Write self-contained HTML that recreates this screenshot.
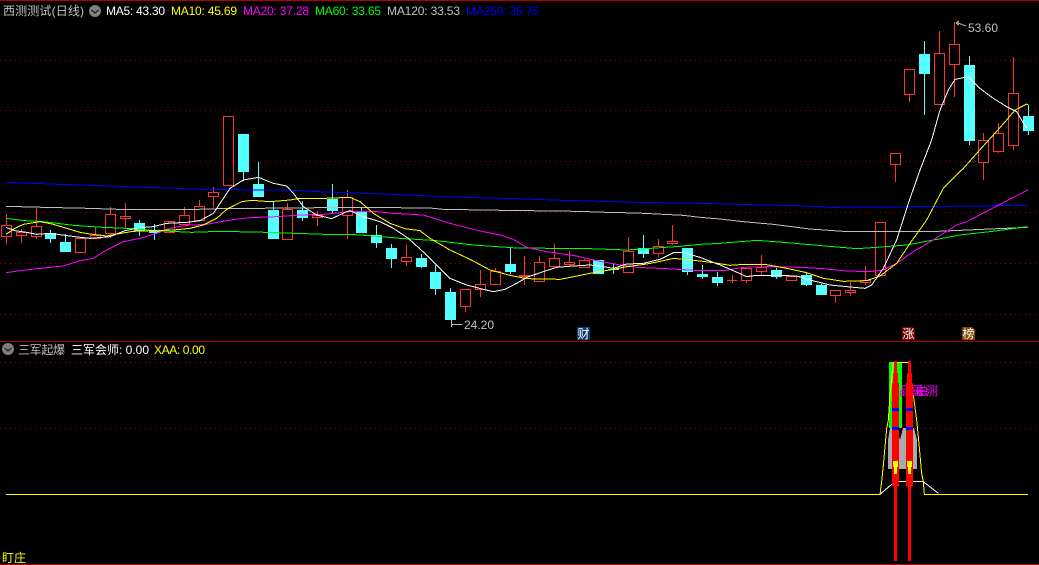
<!DOCTYPE html>
<html><head><meta charset="utf-8">
<style>
html,body{margin:0;padding:0;background:#000;width:1039px;height:565px;overflow:hidden}
svg{display:block;shape-rendering:crispEdges}
text{font-family:"Liberation Sans","WenQuanYi Zen Hei","Noto Sans CJK SC",sans-serif;font-size:12px}
.l polyline{fill:none;stroke-width:1;vector-effect:non-scaling-stroke;stroke-linejoin:round;shape-rendering:crispEdges}
</style></head><body>
<svg width="1039" height="565" viewBox="0 0 1039 565" xmlns="http://www.w3.org/2000/svg">
<rect width="1039" height="565" fill="#000"/>
<!-- grid -->
<path d="M0 60.5H1039M0 110.5H1039M0 161.5H1039M0 212.5H1039M0 263.5H1039M0 314.5H1039M0 362.5H1039M0 428.5H1039" stroke="#a00000" stroke-width="1" stroke-dasharray="1 4" fill="none"/>
<path d="M0 .5H1039M0 341.5H1039M0 564.5H1039" stroke="#b00000" stroke-width="1" fill="none"/>
<!-- cyan candles -->
<path stroke="#55ffff" fill="none" d="M50.5 230V243M65.5 234V252M139.5 220V236M154.5 224V240M243.5 134V181M258.5 162V197M273.5 202V239M302.5 201V221M332.5 184V213M361.5 208V233M376.5 225V248M391.5 244V268M421.5 254V268M435.5 265V295M450.5 288V320M510.5 248V274M598.5 260V274M613.5 264V274M643.5 235V258M687.5 248V275M702.5 265V279M717.5 272V286M776.5 268V279M806.5 273V286M821.5 284V295M924.5 41V115M969.5 56V145M1028.5 105V135M608 269.5H619"/>
<path fill="#55ffff" d="M45 233h11v6h-11zM60 242h11v10h-11zM134 223h11v8h-11zM149 230h11v3h-11zM238 134h11v38h-11zM253 184h11v13h-11zM268 210h11v29h-11zM297 210h11v8h-11zM327 199h11v12h-11zM356 211h11v22h-11zM371 235h11v8h-11zM386 248h11v11h-11zM416 258h11v9h-11zM430 272h11v17h-11zM445 292h11v28h-11zM505 264h11v8h-11zM593 260h11v14h-11zM638 248h11v6h-11zM682 248h11v24h-11zM697 274h11v3h-11zM712 277h11v6h-11zM771 270h11v7h-11zM801 275h11v10h-11zM816 285h11v10h-11zM919 54h11v20h-11zM964 65h11v76h-11zM1023 116h11v15h-11z"/>
<!-- red candles -->
<path stroke="#ff3232" fill="none" d="M6.500 214V244M21.500 229V243M36.500 208V239M95.500 227V239M110.500 207V238M125.500 203V228M184.500 207V215M199.500 200V206M213.500 187V207M287.500 203V209M317.500 211V226M347.500 190V239M406.500 245V266M465.500 307V312M480.500 270V297M495.500 268V271M524.500 256V285M539.500 256V262M554.500 244V258M569.500 251V267M584.500 259V260M628.500 237V251M658.500 239V257M672.500 225V245M746.500 281V283M761.500 255V275M835.500 296V303M850.500 282V296M865.500 266V285M895.500 165V182M909.500 95V102M939.500 31V53M954.500 22V97M983.500 133V180M998.500 123V153M1013.500 57V150M727 280.500H737M732.500 275V283"/>
<path stroke="#ff3232" fill="#000" d="M1.5 225.5h10v11h-10zM16.5 232.5h10v3h-10zM31.5 226.5h10v10h-10zM75.5 238.5h10v14h-10zM90.5 235.5h10v3h-10zM105.5 214.5h10v19h-10zM120.5 216.5h10v2h-10zM164.5 221.5h10v11h-10zM179.5 215.5h10v9h-10zM194.5 206.5h10v14h-10zM208.5 192.5h10v4h-10zM223.5 116.5h10v69h-10zM282.5 209.5h10v30h-10zM312.5 215.5h10v2h-10zM342.5 197.5h10v18h-10zM401.5 257.5h10v4h-10zM460.5 289.5h10v17h-10zM475.5 284.5h10v5h-10zM490.5 271.5h10v13h-10zM519.5 275.5h10v1h-10zM534.5 262.5h10v19h-10zM549.5 258.5h10v8h-10zM564.5 262.5h10v2h-10zM579.5 260.5h10v7h-10zM623.5 251.5h10v21h-10zM653.5 246.5h10v7h-10zM667.5 241.5h10v2h-10zM741.5 268.5h10v12h-10zM756.5 267.5h10v4h-10zM786.5 276.5h10v4h-10zM830.5 290.5h10v5h-10zM845.5 290.5h10v2h-10zM860.5 280.5h10v2h-10zM875.5 222.5h10v53h-10zM890.5 153.5h10v11h-10zM904.5 69.5h10v25h-10zM934.5 53.5h10v51h-10zM949.5 44.5h10v20h-10zM978.5 140.5h10v22h-10zM993.5 133.5h10v18h-10zM1008.5 93.5h10v52h-10z"/>
<!-- MA lines -->
<g class="l" transform="translate(0,170) scale(.33333)">
<polyline stroke="#0000ff" points="18,37 175,43 265,46 355,49 440,52 530,55 620,58 880,61 975,66 1050,68"/>
<polyline stroke="#c0c0c0" points="18,109 130,112 265,115 355,118 590,118 660,116 880,114 1050,112"/>
<polyline stroke="#00ff00" points="18,145 75,152 130,155 220,166 310,172 400,176 470,182 575,187 660,184 800,187 885,190 975,193 1050,193"/>
<polyline stroke="#ff00ff" points="18,308 75,300 140,293 190,288 240,272 280,265 320,240 370,215 420,205 470,190 510,175 560,166 620,163 690,150 750,143 830,140 900,135 970,133 1020,128 1050,125"/>
<polyline stroke="#ffff00" points="18,193 45,175 70,163 120,155 160,163 200,175 240,187 270,192 320,198 350,192 400,184 450,182 520,180 570,175 610,165 650,145 680,118 725,95 755,91 810,95 870,90 900,85 975,85 1050,82"/>
<polyline stroke="#ffffff" points="18,172 45,182 80,187 110,193 150,190 195,196 240,202 270,205 330,200 375,182 420,173 460,170 500,160 560,157 600,152 640,130 660,100 690,55 730,30 775,22 820,40 860,48 880,70 910,110 950,135 995,146 1040,125 1050,122"/>
</g>
<g class="l" transform="translate(350,170) scale(.33333)">
<polyline stroke="#0000ff" points="0,68 100,72 190,76 280,80 370,83 460,85 640,91 860,97 1050,100"/>
<polyline stroke="#c0c0c0" points="0,112 240,114 280,118 460,121 680,124 770,127 860,129 1000,136 1050,142"/>
<polyline stroke="#00ff00" points="0,193 60,197 150,205 260,212 370,225 500,234 720,236 830,240 990,229 1050,223"/>
<polyline stroke="#ff00ff" points="0,125 70,124 130,130 220,135 300,160 400,185 450,195 490,208 530,232 590,245 680,258 740,272 800,283 860,292 950,296 1050,302"/>
<polyline stroke="#ffff00" points="0,82 30,95 70,130 120,160 165,176 210,182 240,205 300,240 360,268 420,300 480,316 530,326 630,328 670,320 730,308 790,298 830,290 890,282 940,272 970,265 1050,273"/>
<polyline stroke="#ffffff" points="0,122 40,140 90,155 130,175 175,205 230,255 300,325 350,345 400,358 430,365 465,358 500,340 530,322 580,305 620,292 670,288 720,285 760,290 790,295 830,282 880,280 930,268 970,248 1000,248 1050,262"/>
</g>
<g class="l" transform="translate(700,170) scale(.33333)">
<polyline stroke="#0000ff" points="0,100 160,104 300,107 390,112 650,110 983,106"/>
<polyline stroke="#c0c0c0" points="0,142 60,147 130,155 220,163 330,177 430,184 690,185 870,177 983,172"/>
<polyline stroke="#00ff00" points="0,223 60,220 120,215 170,211 250,217 330,224 400,230 470,236 530,232 620,225 700,210 780,195 870,185 983,170"/>
<polyline stroke="#ff00ff" points="0,302 70,302 130,292 210,290 300,292 370,296 440,303 510,305 550,300 590,280 640,245 700,210 770,165 800,155 900,103 983,60"/>
<polyline stroke="#ffff00" points="0,273 40,278 90,286 120,284 200,284 260,295 320,308 370,325 430,334 500,332 540,318 590,280 630,220 680,150 730,55 785,0"/>
<polyline stroke="#ffffff" points="0,262 60,285 100,302 140,320 170,316 230,316 290,318 330,330 390,345 440,350 495,355 515,345 550,295 590,210 625,100 660,0"/>
</g>
<g class="l" transform="translate(860,10) scale(.33333)">
<polyline stroke="#ffff00" points="306,480 350,430 400,375 440,330 465,300 500,282 505,285"/>
<polyline stroke="#ffffff" points="180,480 215,390 240,300 265,240 285,208 325,200 360,235 400,265 440,290 470,305 500,355"/>
</g>
<!-- price markers -->
<path d="M462.500 324.500H452M451.500 323.500V320M451.500 323.500V327" stroke="#c0c0c0" fill="none"/>
<text x="464" y="329" fill="#c0c0c0" textLength="30">24.20</text>
<path d="M966 26L958 23M956 23l3-2M956 23l3 2" stroke="#c0c0c0" fill="none"/>
<text x="968" y="32" fill="#c0c0c0" textLength="30">53.60</text>
<!-- header -->
<text x="3" y="15" fill="#c0c0c0" font-size="12" textLength="81">西测测试(日线)</text>
<g style="shape-rendering:auto">
<circle cx="95" cy="11" r="6" fill="#808080"/>
<path d="M91.5 10l3.5 3 3.5-3" stroke="#222" stroke-width="1.4" fill="none"/>
<circle cx="8" cy="349" r="6" fill="#808080"/>
<path d="M4.5 348l3.5 3 3.5-3" stroke="#222" stroke-width="1.4" fill="none"/>
</g>
<text x="106" y="15" fill="#ffffff" textLength="59">MA5: 43.30</text>
<text x="171" y="15" fill="#ffff00" textLength="66">MA10: 45.69</text>
<text x="243" y="15" fill="#ff00ff" textLength="66">MA20: 37.28</text>
<text x="315" y="15" fill="#00ff00" textLength="66">MA60: 33.65</text>
<text x="387" y="15" fill="#c0c0c0" textLength="73">MA120: 33.53</text>
<text x="466" y="15" fill="#0000ff" textLength="73">MA250: 35.75</text>
<!-- tags -->
<rect x="577" y="327" width="13" height="13" fill="#0a3c6e"/>
<text x="577.5" y="338" fill="#fff" font-size="12" textLength="12">财</text>
<path d="M902 327h10l3 3v10h-13z" fill="#800000"/>
<text x="902.5" y="338" fill="#fff" font-size="12" textLength="12">涨</text>
<path d="M962 327h10l3 3v10h-13z" fill="#7f4300"/>
<text x="962.5" y="338" fill="#fff" font-size="12" textLength="12">榜</text>
<!-- lower header -->
<text x="18" y="354" fill="#c0c0c0" textLength="47">三军起爆</text>
<text x="71" y="354" fill="#ffffff" textLength="78">三军会师: 0.00</text>
<text x="154" y="354" fill="#ffff00" textLength="51">XAA: 0.00</text>
<!-- lower indicator -->
<path d="M889 362h13v66h-13z" fill="#00ff00"/>
<path d="M888 469V440L890 428H897L900 440L903 428H911L914 428L917 440V469H888Z" fill="#aaaaaa"/>
<g class="l" transform="translate(860,340) scale(.33333)">
<polyline stroke="#ffffff" points="60,463 95,433 115,425 190,425 235,460"/>
<polyline stroke="#ffff00" points="60,463 65,425 70,375 75,320 80,265 85,240 90,165 95,120 100,67 145,67 160,165 170,240 175,290 180,345 185,400 190,425 193,463"/>
</g>
<path d="M6 494.500H880.500M924 494.500H1028" stroke="#ffff00" fill="none"/>
<text x="899" y="395" fill="#ff00ff" font-size="13">品</text>
<text x="912" y="395" fill="#ff00ff" font-size="13">融</text>
<text x="916" y="395" fill="#ff00ff" font-size="13">融</text>
<text x="926" y="395" fill="#ff00ff" font-size="13">测</text>
<path d="M892 383h7v103h-7zM906 383h7v103h-7z" fill="#ff0000"/>
<path d="M893 373h5v10h-5zM907 373h5v10h-5zM894 361h3v200h-3zM908 361h3v200h-3z" fill="#ff0000"/>
<path d="M892 408h7v3h-7zM906 408h7v3h-7zM892 427h7v3h-7zM906 427h7v3h-7z" fill="#0000ff"/>
<path d="M893 461h5v6h-5zM907 461h5v6h-5zM894 467h3v7h-3zM908 467h3v7h-3z" fill="#ffff00"/>
<text x="2" y="562" fill="#ffff00" font-size="12" textLength="24">盯庄</text>
</svg>
</body></html>
